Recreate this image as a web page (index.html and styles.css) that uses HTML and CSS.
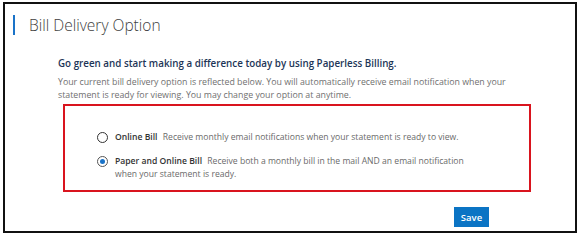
FILE: index.html
```html
<!DOCTYPE html>
<html>
<head>
<meta charset="utf-8">
<link rel="stylesheet" href="styles.css">
</head>
<body>
<div class="frame">
  <div class="header">
    <span class="bar"></span>
    <h1 class="title">Bill Delivery Option</h1>
  </div>
  <div class="content">
    <h2 class="lead">Go green and start making a difference today by using Paperless Billing.</h2>
    <p class="desc">Your current bill delivery option is reflected below. You will automatically receive email notification when your statement is ready for viewing. You may change your option at anytime.</p>
    <div class="options">
      <label class="option">
        <span class="radio"></span>
        <span class="otext"><b>Online Bill</b> Receive monthly email notifications when your statement is ready to view.</span>
      </label>
      <label class="option">
        <span class="radio checked"></span>
        <span class="otext"><b>Paper and Online Bill</b> Receive both a monthly bill in the mail AND an email notification when your statement is ready.</span>
      </label>
    </div>
    <div class="actions">
      <button class="save">Save</button>
    </div>
  </div>
</div>
</body>
</html>
```
FILE: styles.css
```css
html, body {
  margin: 0;
  padding: 0;
  background: #fff;
}
body {
  font-family: "Open Sans", "Liberation Sans", sans-serif;
}
.frame {
  margin: 2px 3px 0 3px;
  width: 570px;
  height: 227px;
  border: 2px solid #111;
}
.header {
  display: flex;
  align-items: center;
  padding: 11px 0 0 8px;
  height: 20px;
}
.bar {
  width: 2px;
  height: 20px;
  background: #1a73c8;
  margin-right: 14px;
}
.title {
  margin: 0;
  font-size: 15.5px;
  font-weight: 300;
  color: #404040;
  line-height: 20px;
}
.content {
  padding: 22px 0 0 53px;
}
.lead {
  margin: 0;
  font-size: 9.8px;
  font-weight: 600;
  color: #1d3557;
  line-height: 14px;
}
.desc {
  margin: 5px 0 0 0;
  font-size: 8.8px;
  color: #707070;
  line-height: 13px;
  width: 460px;
}
.options {
  margin: 2px 0 0 5px;
  width: 468px;
  height: 88px;
  border: 2px solid #d9141e;
  padding: 25px 0 0 32px;
  box-sizing: border-box;
}
.option {
  display: flex;
  align-items: flex-start;
  margin-bottom: 11px;
}
.radio {
  flex: none;
  width: 9px;
  height: 9px;
  border: 1px solid #333;
  border-radius: 50%;
  margin-right: 7px;
  margin-top: 1px;
  position: relative;
  background: #fff;
}
.radio.checked {
  border-color: #555;
}
.radio.checked::after {
  content: "";
  position: absolute;
  left: 2px;
  top: 2px;
  width: 5px;
  height: 5px;
  border-radius: 50%;
  background: #1a73c8;
}
.otext {
  font-size: 8.6px;
  color: #6a6a6a;
  line-height: 13px;
  width: 370px;
}
.otext b {
  font-weight: 600;
  color: #333;
  margin-right: 3px;
}
.actions {
  display: flex;
  justify-content: flex-end;
  width: 431px;
  margin-top: 15px;
}
.save {
  background: #0b74c4;
  color: #fff;
  border: none;
  font-family: "Open Sans", "Liberation Sans", sans-serif;
  font-size: 9.5px;
  font-weight: 600;
  width: 35px;
  height: 20px;
  padding: 0;
}
```
